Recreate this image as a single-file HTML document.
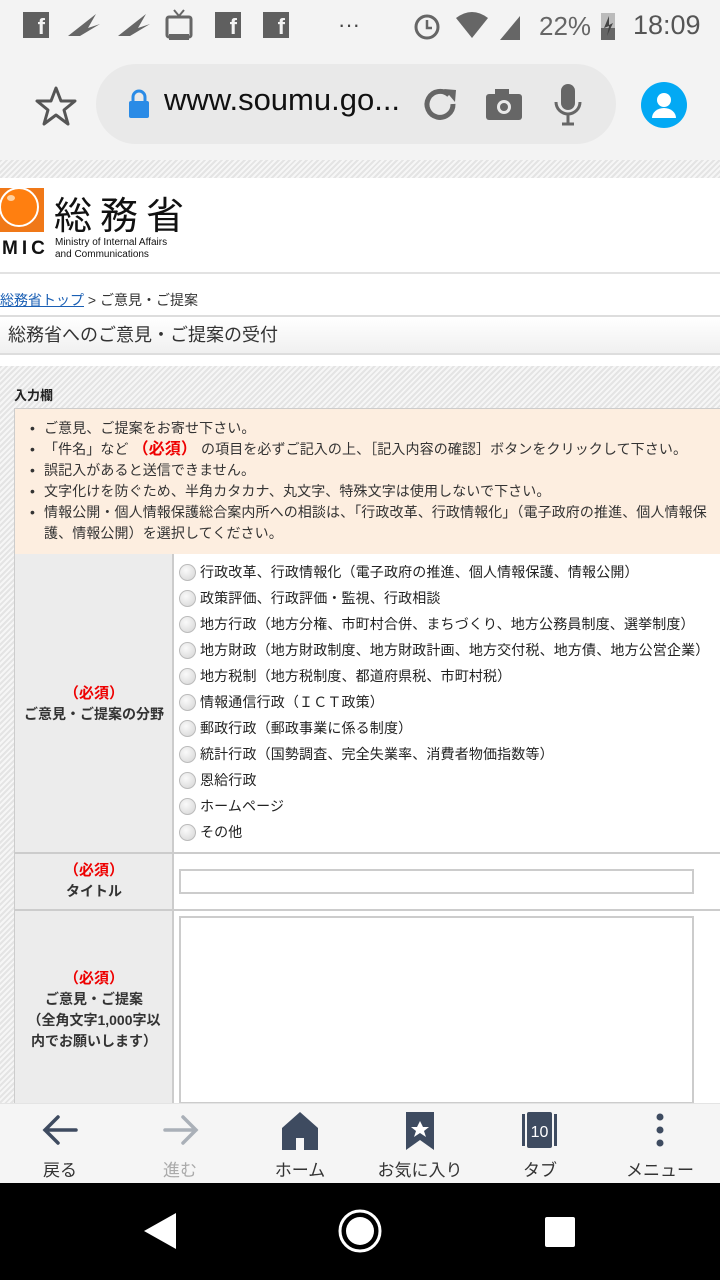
<!DOCTYPE html>
<html><head><meta charset="utf-8"><style>
*{margin:0;padding:0;box-sizing:border-box}
body{width:720px;height:1280px;overflow:hidden;position:relative;font-family:"Liberation Sans","Noto Sans CJK JP",sans-serif;background:#fff;color:#222}
.abs{position:absolute}
.status{left:0;top:0;width:720px;height:50px;background:#f3f3f3}
.top{left:0;top:50px;width:720px;height:110px;background:#f3f3f3}
.hatch{background:repeating-linear-gradient(135deg,#e4e4e4 0 2px,#f6f6f6 2px 4px)}
.li{font-size:14px;line-height:21px;padding-left:14px;position:relative;letter-spacing:0.1px}
.li:before{content:"•";position:absolute;left:0}
.radio{font-size:14px;height:26px;line-height:26px;white-space:nowrap;display:flex;align-items:center;letter-spacing:0.15px}
.radio i{display:inline-block;width:17px;height:17px;border-radius:50%;background:radial-gradient(circle at 40% 35%,#fafafa,#d4d4d4);border:1px solid #bbb;margin-right:4px}
.lab{text-align:center;font-size:14px;font-weight:bold;line-height:21px;color:#333}
.req{color:#e00;font-weight:bold;font-size:15px}
.nav{text-align:center;font-size:17px;color:#333;width:120px}
</style></head><body>
<div class="abs status">
 <div class="abs" style="left:23px;top:12px;width:26px;height:26px;background:#5f5f5f;color:#f3f3f3;font:bold 22px/30px 'Liberation Sans';text-align:right;padding-right:4px">f</div>
 <div class="abs" style="left:215px;top:12px;width:26px;height:26px;background:#5f5f5f;color:#f3f3f3;font:bold 22px/30px 'Liberation Sans';text-align:right;padding-right:4px">f</div>
 <div class="abs" style="left:263px;top:12px;width:26px;height:26px;background:#5f5f5f;color:#f3f3f3;font:bold 22px/30px 'Liberation Sans';text-align:right;padding-right:4px">f</div>
 <svg class="abs" style="left:66px;top:10px" width="110" height="32"><path d="M2 26 L30 4 L22 18 L34 14 L14 26Z" fill="#666"/><path d="M52 26 L80 4 L72 18 L84 14 L64 26Z" fill="#666"/></svg>
 <svg class="abs" style="left:164px;top:6px" width="32" height="36"><rect x="3" y="11" width="24" height="20" rx="2" fill="none" stroke="#666" stroke-width="3"/><path d="M10 4 L15 10 L20 4" stroke="#666" stroke-width="2" fill="none"/><rect x="5" y="28" width="20" height="6" fill="#666"/></svg>
 <div class="abs" style="left:338px;top:12px;font-size:22px;color:#444">···</div>
 <svg class="abs" style="left:410px;top:8px" width="120" height="34"><circle cx="17" cy="19" r="11" fill="none" stroke="#666" stroke-width="3"/><path d="M17 12v8h5" stroke="#666" stroke-width="2.5" fill="none"/><path d="M46 10 Q62 -2 78 10 L62 30Z" fill="#666"/><path d="M90 32 L110 8 L110 32Z" fill="#666"/></svg>
 <div class="abs" style="left:539px;top:11px;font-size:26px;color:#666">22%</div>
 <svg class="abs" style="left:598px;top:10px" width="22" height="32"><rect x="3" y="3" width="14" height="27" fill="#bbb"/><rect x="3" y="18" width="14" height="12" fill="#666"/><path d="M11 6 L6 18 L11 16 L9 26 L15 13 L11 15Z" fill="#444"/></svg>
 <div class="abs" style="left:633px;top:10px;font-size:27px;color:#555">18:09</div>
</div>
<div class="abs top">
 <svg class="abs" style="left:34px;top:34px" width="44" height="44"><path d="M22 4 L27 17 L41 17 L30 26 L34 40 L22 31 L10 40 L14 26 L3 17 L17 17Z" fill="none" stroke="#555" stroke-width="3" stroke-linejoin="round"/></svg>
 <div class="abs" style="left:96px;top:14px;width:520px;height:80px;border-radius:40px;background:#e9e9e9"></div>
 <svg class="abs" style="left:126px;top:38px" width="26" height="32"><path d="M7 14 V9 a6 6 0 0 1 12 0 V14" stroke="#2a8be6" stroke-width="3" fill="none"/><rect x="3" y="13" width="20" height="17" rx="2" fill="#2a8be6"/></svg>
 <div class="abs" style="left:164px;top:32px;font-size:31px;color:#111">www.soumu.go...</div>
 <svg class="abs" style="left:420px;top:34px" width="120" height="40"><path d="M33 20 a13 13 0 1 1 -4 -9" stroke="#666" stroke-width="5" fill="none"/><path d="M24 5 L36 6 L35 18Z" fill="#666"/><rect x="66" y="10" width="36" height="26" rx="3" fill="#666"/><rect x="75" y="5" width="14" height="7" fill="#666"/><circle cx="84" cy="23" r="7" fill="#e9e9e9"/><circle cx="84" cy="23" r="4" fill="#666"/></svg>
 <svg class="abs" style="left:552px;top:32px" width="32" height="46"><rect x="9" y="2" width="14" height="26" rx="7" fill="#666"/><path d="M4 20 a12 12 0 0 0 24 0 M16 32 V42 M10 42 H22" stroke="#666" stroke-width="3" fill="none"/></svg>
 <div class="abs" style="left:641px;top:32px;width:46px;height:46px;border-radius:50%;background:#03a9f4"></div>
 <svg class="abs" style="left:641px;top:32px" width="46" height="46"><circle cx="23" cy="18" r="7" fill="#fff"/><path d="M11 36 a12 10 0 0 1 24 0Z" fill="#fff"/></svg>
</div>
<div class="abs hatch" style="left:0;top:160px;width:720px;height:18px"></div>
<svg class="abs" style="left:0;top:186px" width="46" height="48"><rect x="0" y="2" width="44" height="44" fill="#f07818"/><circle cx="19" cy="21" r="19" fill="#ff7f10" stroke="#fff" stroke-width="2"/><ellipse cx="11" cy="12" rx="4" ry="3" fill="#ffd0a0"/></svg>
<div class="abs" style="left:2px;top:238px;font:bold 19px 'Liberation Sans';letter-spacing:4px;color:#111">MIC</div>
<div class="abs" style="left:54px;top:188px;font-size:38px;letter-spacing:8px;color:#111;font-family:'Noto Sans CJK JP',sans-serif;line-height:50px">総務省</div>
<div class="abs" style="left:55px;top:237px;font-size:10px;line-height:12px;color:#111">Ministry of Internal Affairs<br>and Communications</div>
<div class="abs" style="left:0;top:272px;width:720px;height:2px;background:#e2e2e2"></div>
<div class="abs" style="left:0;top:290px;font-size:14px;color:#333"><span style="color:#1a5fb4;text-decoration:underline">総務省トップ</span> &gt; ご意見・ご提案</div>
<div class="abs" style="left:0;top:315px;width:720px;height:40px;border-top:2px solid #ddd;border-bottom:2px solid #ddd;background:linear-gradient(#fff,#f0f0f0);font-size:18px;line-height:36px;padding-left:8px;color:#333">総務省へのご意見・ご提案の受付</div>
<div class="abs hatch" style="left:0;top:366px;width:720px;height:740px"></div>
<div class="abs" style="left:14px;top:385px;font-size:13px;font-weight:bold">入力欄</div>
<div class="abs" style="left:14px;top:408px;width:720px;height:147px;background:#fdeee0;border:1px solid #ccc;padding:9px 14px 0 15px;font-size:14px;color:#333">
 <div class="li">ご意見、ご提案をお寄せ下さい。</div>
 <div class="li">「件名」など <span class="req" style="font-size:16px">（必須）</span> の項目を必ずご記入の上、［記入内容の確認］ボタンをクリックして下さい。</div>
 <div class="li">誤記入があると送信できません。</div>
 <div class="li">文字化けを防ぐため、半角カタカナ、丸文字、特殊文字は使用しないで下さい。</div>
 <div class="li">情報公開・個人情報保護総合案内所への相談は、「行政改革、行政情報化」（電子政府の推進、個人情報保護、情報公開）を選択してください。</div>
</div>
<div class="abs" style="left:14px;top:554px;width:160px;height:560px;background:#ececec;border-left:1px solid #ccc;border-right:2px solid #ccc"></div>
<div class="abs" style="left:174px;top:554px;width:546px;height:560px;background:#fff"></div>
<div class="abs" style="left:14px;top:852px;width:706px;height:2px;background:#ccc"></div>
<div class="abs" style="left:14px;top:909px;width:706px;height:2px;background:#ccc"></div>
<div class="abs" style="left:179px;top:559px">
 <div class="radio"><i></i>行政改革、行政情報化（電子政府の推進、個人情報保護、情報公開）</div>
 <div class="radio"><i></i>政策評価、行政評価・監視、行政相談</div>
 <div class="radio"><i></i>地方行政（地方分権、市町村合併、まちづくり、地方公務員制度、選挙制度）</div>
 <div class="radio"><i></i>地方財政（地方財政制度、地方財政計画、地方交付税、地方債、地方公営企業）</div>
 <div class="radio"><i></i>地方税制（地方税制度、都道府県税、市町村税）</div>
 <div class="radio"><i></i>情報通信行政（ＩＣＴ政策）</div>
 <div class="radio"><i></i>郵政行政（郵政事業に係る制度）</div>
 <div class="radio"><i></i>統計行政（国勢調査、完全失業率、消費者物価指数等）</div>
 <div class="radio"><i></i>恩給行政</div>
 <div class="radio"><i></i>ホームページ</div>
 <div class="radio"><i></i>その他</div>
</div>
<div class="abs lab" style="left:14px;top:683px;width:160px"><span class="req">（必須）</span><br>ご意見・ご提案の分野</div>
<div class="abs lab" style="left:14px;top:860px;width:160px"><span class="req">（必須）</span><br>タイトル</div>
<div class="abs lab" style="left:14px;top:968px;width:160px"><span class="req">（必須）</span><br>ご意見・ご提案<br>（全角文字1,000字以<br>内でお願いします）</div>
<div class="abs" style="left:179px;top:869px;width:515px;height:25px;border:2px solid #ccc;background:#fff"></div>
<div class="abs" style="left:179px;top:916px;width:515px;height:188px;border:2px solid #ccc;background:#fff"></div>
<div class="abs" style="left:0;top:1103px;width:720px;height:80px;background:#f5f5f5;border-top:1px solid #e4e4e4"></div>
<svg class="abs" style="left:0;top:1110px" width="720" height="42">
 <path d="M76 20 H45 M58 7 L45 20 L58 33" stroke="#3e4b60" stroke-width="3.5" fill="none" stroke-linecap="round"/>
 <path d="M165 20 H196 M183 7 L196 20 L183 33" stroke="#aab0b8" stroke-width="3.5" fill="none" stroke-linecap="round"/>
 <path d="M282 18 L300 2 L318 18 V40 H304 V28 H296 V40 H282Z" fill="#3e4b60"/>
 <path d="M406 2 H434 V40 L420 30 L406 40Z" fill="#3e4b60"/>
 <path d="M420 11 L423 17 L429 17 L424 21 L426 27 L420 23 L414 27 L416 21 L411 17 L417 17Z" fill="#fff"/>
 <rect x="522" y="4" width="3" height="32" fill="#3e4b60"/><rect x="554" y="4" width="3" height="32" fill="#3e4b60"/>
 <rect x="527" y="2" width="25" height="36" rx="2" fill="#3e4b60"/>
 <text x="539.5" y="27" font-size="16" fill="#fff" text-anchor="middle" font-family="Liberation Sans">10</text>
 <circle cx="660" cy="7" r="3.5" fill="#3e4b60"/><circle cx="660" cy="20" r="3.5" fill="#3e4b60"/><circle cx="660" cy="33" r="3.5" fill="#3e4b60"/>
</svg>
<div class="abs nav" style="left:0;top:1156px">戻る</div>
<div class="abs nav" style="left:120px;top:1156px;color:#aaa">進む</div>
<div class="abs nav" style="left:240px;top:1156px">ホーム</div>
<div class="abs nav" style="left:360px;top:1156px">お気に入り</div>
<div class="abs nav" style="left:480px;top:1156px">タブ</div>
<div class="abs nav" style="left:600px;top:1156px">メニュー</div>
<div class="abs" style="left:0;top:1183px;width:720px;height:97px;background:#000"></div>
<svg class="abs" style="left:0;top:1183px" width="720" height="97">
 <path d="M176 30 V66 L144 48Z" fill="#fff"/>
 <circle cx="360" cy="48" r="20" fill="none" stroke="#fff" stroke-width="3"/><circle cx="360" cy="48" r="14" fill="#fff"/>
 <rect x="545" y="34" width="30" height="30" rx="2" fill="#fff"/>
</svg>
</body></html>
